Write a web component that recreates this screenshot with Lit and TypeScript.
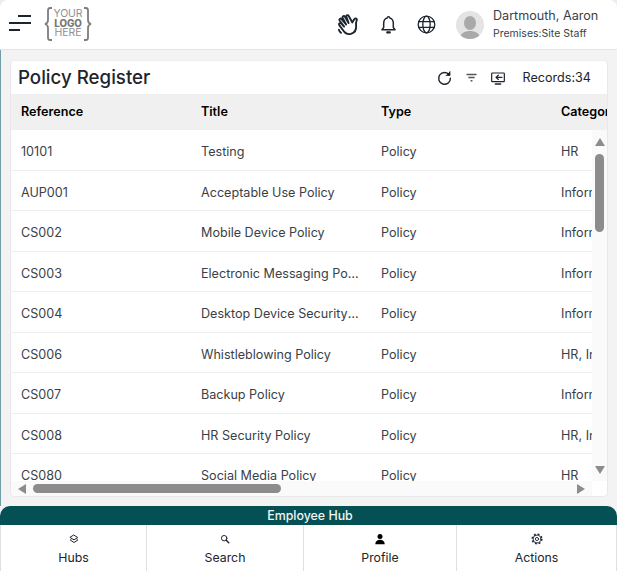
import { LitElement, html, css, svg } from "lit";
import { customElement } from "lit/decorators.js";

const rows = [
  ["10101", "Testing", "Policy", "HR"],
  ["AUP001", "Acceptable Use Policy", "Policy", "Information Security"],
  ["CS002", "Mobile Device Policy", "Policy", "Information Security"],
  ["CS003", "Electronic Messaging Policy", "Policy", "Information Security"],
  ["CS004", "Desktop Device Security Policy", "Policy", "Information Security"],
  ["CS006", "Whistleblowing Policy", "Policy", "HR, Information Security"],
  ["CS007", "Backup Policy", "Policy", "Information Security"],
  ["CS008", "HR Security Policy", "Policy", "HR, Information Security"],
  ["CS080", "Social Media Policy", "Policy", "HR"],
];

const ic = (size: number, body: unknown, sw = 1.6) => html`<svg width=${size} height=${size} viewBox="0 0 24 24" fill="none" stroke="#1c2430" stroke-width=${sw} stroke-linecap="round" stroke-linejoin="round">${body}</svg>`;

const hand = svg`<path d="M7.500 18.500 3.100 12.600c-.9-1.400 1-2.600 2-1.400l2.700 2.800M7.800 14 3.400 8.200c-.8-1.500 1.200-2.600 2.100-1.200l4.200 5M9.700 12 6.400 5.600c-.6-1.500 1.400-2.400 2.200-1l3.500 6M12.100 10.600 9.900 4.400c-.3-1.500 1.700-2 2.300-.6l3.500 6.200c.8-1.500 1.500-3 2.500-3.600 1.300-.7 2.300.5 1.700 1.600-.9 1.700-.8 3-.6 5.200.3 3.600-1.500 6.800-5 7.800-3 .8-5.300-.4-6.800-2.500"/><path d="M2.800 17c.3 1.200.9 2.200 2 3"/>`;
const bell = svg`<path d="M12 3a1.300 1.300 0 0 1 1.300 1.400C16 5.200 17.500 7.500 17.500 10.500V15.500L19.500 18H4.500L6.500 15.500V10.500C6.500 7.500 8 5.200 10.700 4.400A1.300 1.300 0 0 1 12 3Z"/><path d="M10.500 21h3" stroke-width="2.400"/>`;
const globe = svg`<circle cx="12" cy="12" r="9.500"/><ellipse cx="12" cy="12" rx="4.200" ry="9.500"/><path d="M3 8.800h18M3 15.200h18"/>`;
const refresh = svg`<path d="M18.800 8.500A8.300 8.300 0 1 0 20.300 13"/><path d="M19.800 3.500v5.700h-5.700" fill="#111" stroke-width="1"/>`;
const filter = svg`<path d="M4 7h16M7 12h10M10.500 17h3" stroke="#555" stroke-width="2.400" stroke-linecap="butt"/>`;
const screen = svg`<rect x="2.500" y="4.500" width="19" height="13" rx="1"/><path d="M8 21h8" stroke-width="2.200"/><path d="M18 11H9M12.500 7.800 9 11l3.500 3.200"/>`;
const layers = svg`<path d="M12 3 21 8.500 12 14 3 8.500Z"/><path d="M5 13l-2 1.500 9 6 9-6-2-1.500"/>`;
const search = svg`<circle cx="10" cy="10" r="6.500"/><path d="M15 15l6 6" stroke-width="3.400"/>`;
const person = svg`<circle cx="12" cy="6.800" r="5" fill="#000" stroke="none"/><path d="M2.500 22.500c0-6 4-9 9.500-9s9.500 3 9.500 9Z" fill="#000" stroke="none"/>`;
const gear = svg`<circle cx="12" cy="12" r="3.200"/><circle cx="12" cy="12" r="7.800"/><circle cx="12" cy="12" r="9.600" stroke-width="3.200" stroke-dasharray="3.770 3.770" stroke-linecap="butt"/>`;

@customElement("app-root")
export class AppRoot extends LitElement {
  static styles = css`
    :host {
      display: block;
      width: 617px;
      height: 571px;
      overflow: hidden;
      font-family: Inter, "Liberation Sans", sans-serif;
      background: #ededed;
      color: #3a3f47;
    }
    svg { display: block; flex: none; }
    .page {
      height: 571px;
      display: flex;
      flex-direction: column;
    }
    .top {
      height: 49px;
      flex: none;
      background: #fff;
      border-bottom: 1px solid #e4e4e4;
      border-radius: 8px 8px 0 0;
      display: flex;
      align-items: center;
      padding: 0 17px 0 9px;
    }
    .burger { display: flex; flex-direction: column; align-items: flex-end; gap: 5px; width: 22px; margin: 0 13px 3px 0; }
    .burger i { display: block; height: 2px; background: #1c2430; }
    .logo { display: flex; align-items: center; gap: 1px; margin-bottom: 2px; }
    .logo-text { display: flex; flex-direction: column; align-items: center; font-size: 10.500px; line-height: 9.500px; letter-spacing: -0.1px; color: #8f8f8f; width: 28px; }
    .logo-text span, .logo-text b { display: block; height: 9.500px; overflow: visible; }
    .logo-text b { font-weight: 800; color: #777; font-size: 9.800px; }
    .spacer { flex: 1; }
    .tools { display: flex; align-items: center; gap: 17px; margin-right: 19px; }
    .avatar { width: 28px; height: 28px; border-radius: 50%; background: #e4e4e4; overflow: hidden; margin-right: 9px; }
    .user { display: flex; flex-direction: column; width: 107px; }
    .user .n { font-size: 12.600px; line-height: 16px; color: #3a3f47; white-space: nowrap; }
    .user .r { font-size: 10.500px; line-height: 14px; color: #3a3f47; white-space: nowrap; margin-top: 3px; }
    .content { flex: none; background: #f3f3f3; border-left: 1px solid #6f9ea6; padding: 10px 9px 9px 9px; }
    .main { height: 437px; background: #fff; border: 1px solid #e8e8e8; border-top-color: #eee; border-radius: 5px; display: flex; flex-direction: column; overflow: hidden; box-sizing: border-box; }
    .card-head { height: 33px; flex: none; display: flex; align-items: center; padding: 0 16px 0 7px; }
    .card-head h1 { margin: 0; font-size: 18.700px; font-weight: 500; color: #20242c; flex: 1; }
    .actions { display: flex; align-items: center; }
    .records { font-size: 12.600px; color: #20242c; margin-left: 17px; }
    .gap-a { width: 11px; }
    .gap-b { width: 11px; }
    .grid-head, .row { display: grid; grid-template-columns: repeat(4, 180px); }
    .grid-head { height: 36px; flex: none; background: #f0f0f0; align-items: center; overflow: hidden; padding-bottom: 2px; box-sizing: border-box; }
    .grid-head div { font-size: 12.600px; font-weight: 600; color: #000; padding-left: 10px; white-space: nowrap; }
    .body { flex: 1; min-height: 0; display: flex; overflow: hidden; }
    .rows { flex: 1; min-width: 0; overflow: hidden; }
    .row { height: 40.500px; box-sizing: border-box; padding-top: 3.500px; border-bottom: 1px solid #eeeeee; align-items: center; font-size: 12.600px; }
    .row div { padding: 0 11px 0 10px; min-width: 0; white-space: nowrap; overflow: hidden; text-overflow: ellipsis; }
    .row div:last-child { overflow: visible; text-overflow: clip; }
    .v-rail { width: 15px; flex: none; background: #fafafa; display: flex; flex-direction: column; align-items: center; padding-top: 8px; box-sizing: border-box; }
    .v-thumb { width: 9px; height: 78px; border-radius: 5px; background: #8c8c8c; margin-top: 8px; }
    .grow { flex: 1; }
    .v-rail svg:last-child { margin-bottom: 7px; }
    .h-rail { height: 15px; flex: none; background: #fafafa; margin-right: 15px; display: flex; align-items: center; padding: 0 7px; box-sizing: border-box; }
    .h-thumb { width: 248px; height: 9px; border-radius: 5px; background: #8c8c8c; margin-left: 7px; }
    .bottom { flex: 1; display: flex; flex-direction: column; min-height: 0; background: #f3f3f3; }
    .band { height: 19px; flex: none; background: #045055; color: #f2f6f6; border-radius: 10px 10px 0 0; font-size: 12.400px; line-height: 19px; text-align: center; font-weight: 500; padding-left: 3px; }
    .nav { flex: 1; display: grid; grid-template-columns: 147px 157px 153px 160px; background: #fff; }
    .nav div { display: flex; flex-direction: column; align-items: center; padding-top: 8px; box-sizing: border-box; border-right: 1px solid #e0e0e0; font-size: 12.300px; line-height: 15px; color: #20242c; gap: 5px; }
    .nav div:first-child { border-left: 1px solid #e0e0e0; }
    .nav div:last-child { border-right: 1px solid #e0e0e0; }
    .slot { height: 12px; display: flex; align-items: center; justify-content: center; }
  `;

  render() {
    return html`<div class="page">
      <header class="top">
        <div class="burger"><i style="width:13px"></i><i style="width:22px"></i><i style="width:11px;align-self:flex-start"></i></div>
        <div class="logo">
          <svg width="9" height="34" viewBox="0 0 9 34" fill="none" stroke="#7d7d7d" stroke-width="1.800"><path d="M8 1H6C4.500 1 4 2 4 3.500V13C4 15 3 16.500 1 17C3 17.500 4 19 4 21V30.500C4 32 4.500 33 6 33H8"/></svg>
          <div class="logo-text"><span>YOUR</span><b>LOGO</b><span>HERE</span></div>
          <svg width="9" height="34" viewBox="0 0 9 34" fill="none" stroke="#7d7d7d" stroke-width="1.800"><path d="M1 1H3C4.500 1 5 2 5 3.500V13C5 15 6 16.500 8 17C6 17.500 5 19 5 21V30.500C5 32 4.500 33 3 33H1"/></svg>
        </div>
        <div class="spacer"></div>
        <div class="tools">${ic(25, hand, 1.800)}${ic(21, bell, 1.700)}${ic(21, globe, 1.500)}</div>
        <div class="avatar"><svg width="28" height="28" viewBox="0 0 28 28"><ellipse cx="14" cy="12" rx="6" ry="7" fill="#a9a9a9"/><path d="M4 28c0-6 5-8 10-8s10 2 10 8Z" fill="#a9a9a9"/></svg></div>
        <div class="user"><span class="n">Dartmouth, Aaron</span><span class="r">Premises:Site Staff</span></div>
      </header>
      <div class="content">
      <section class="main">
        <div class="card-head">
          <h1>Policy Register</h1>
          <div class="actions">
            ${ic(17, refresh, 2)}
            <span class="gap-a"></span>${ic(15, filter)}
            <span class="gap-b"></span>${ic(16, screen, 1.800)}
            <span class="records">Records:34</span>
          </div>
        </div>
        <div class="grid-head"><div>Reference</div><div>Title</div><div>Type</div><div>Category</div></div>
        <div class="body">
          <div class="rows">
            ${rows.map((r) => html`<div class="row">${r.map((c) => html`<div>${c}</div>`)}</div>`)}
          </div>
          <div class="v-rail">
            <svg width="10" height="8" viewBox="0 0 10 8"><path d="M5 0 10 8H0Z" fill="#8c8c8c"/></svg>
            <div class="v-thumb"></div>
            <div class="grow"></div>
            <svg width="10" height="8" viewBox="0 0 10 8"><path d="M0 0H10L5 8Z" fill="#8c8c8c"/></svg>
          </div>
        </div>
        <div class="h-rail">
          <svg width="8" height="10" viewBox="0 0 8 10"><path d="M8 0V10L0 5Z" fill="#8c8c8c"/></svg>
          <div class="h-thumb"></div>
          <div class="grow"></div>
          <svg width="8" height="10" viewBox="0 0 8 10"><path d="M0 0 8 5 0 10Z" fill="#8c8c8c"/></svg>
        </div>
      </section>
      </div>
      <footer class="bottom">
        <div class="band">Employee Hub</div>
        <nav class="nav">
          <div><span class="slot">${ic(10, layers, 2.400)}</span>Hubs</div>
          <div><span class="slot">${ic(10, search, 2.400)}</span>Search</div>
          <div><span class="slot">${ic(12, person)}</span>Profile</div>
          <div><span class="slot">${ic(12, gear, 1.800)}</span>Actions</div>
        </nav>
      </footer>
    </div>`;
  }
}
